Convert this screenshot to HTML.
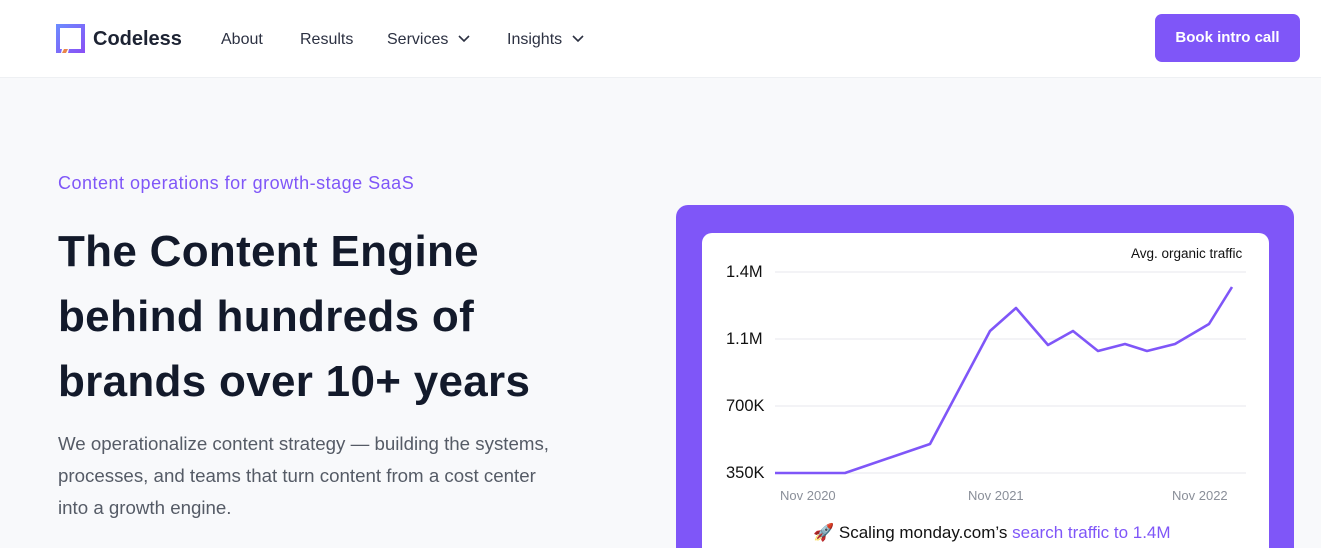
<!DOCTYPE html>
<html><head><meta charset="utf-8"><style>
*{margin:0;padding:0;box-sizing:border-box}
html,body{width:1321px;height:548px;overflow:hidden}
body{background:#f8f9fb;font-family:"Liberation Sans",sans-serif;color:#131a2b;position:relative}
.hdr{position:absolute;left:0;top:0;width:1321px;height:78px;background:#fff;border-bottom:1px solid #eef0f3}
.logo{position:absolute;left:56px;top:24px}
.brand{position:absolute;left:93px;top:28px;font-size:20px;font-weight:bold;color:#1d2333}
.nav{position:absolute;top:31px;font-size:16px;color:#2c3142}
.btn{position:absolute;left:1155px;top:14px;width:145px;height:48px;background:#7f56f8;border-radius:7px;color:#fff;font-size:15px;font-weight:bold;text-align:center;line-height:48px}
.eyebrow{position:absolute;left:58px;top:173px;font-size:18px;letter-spacing:0.5px;color:#7f56f8}
h1{position:absolute;left:58px;top:219px;font-size:44px;line-height:65px;font-weight:bold;color:#131a2b;letter-spacing:0.3px}
.p{position:absolute;left:58px;top:428px;font-size:18.7px;line-height:32px;color:#555b66;width:560px}
.card{position:absolute;left:676px;top:205px;width:618px;height:360px;background:#7f56f8;border-radius:12px}
.inner{position:absolute;left:702px;top:233px;width:567px;height:340px;background:#fff;border-radius:10px}
.t{position:absolute;font-size:16.5px;color:#111}
.x{position:absolute;top:488px;font-size:13px;color:#8a8f99}
</style></head><body>
<div class="hdr">
<svg class="logo" width="30" height="30" viewBox="0 0 30 30"><defs><linearGradient id="g" x1="0" y1="0" x2="1" y2="1"><stop offset="0" stop-color="#6b8cff"/><stop offset="1" stop-color="#8a4ff5"/></linearGradient></defs><path d="M0 0H29V29H12L13 25H25V4H4V25H6L5 29H0Z" fill="url(#g)"/><path d="M6 29L8 25H12L10 29Z" fill="#e9844a"/></svg>
<div class="brand">Codeless</div>
<div class="nav" style="left:221px">About</div>
<div class="nav" style="left:300px">Results</div>
<div class="nav" style="left:387px">Services <svg width="14" height="10" viewBox="0 0 14 10" style="margin-left:4px"><path d="M2 2L7 7L12 2" stroke="#2c3142" stroke-width="1.6" fill="none"/></svg></div>
<div class="nav" style="left:507px">Insights <svg width="14" height="10" viewBox="0 0 14 10" style="margin-left:4px"><path d="M2 2L7 7L12 2" stroke="#2c3142" stroke-width="1.6" fill="none"/></svg></div>
<div class="btn">Book intro call</div>
</div>
<div class="eyebrow">Content operations for growth-stage SaaS</div>
<h1>The Content Engine<br>behind hundreds of<br>brands over 10+ years</h1>
<div class="p">We operationalize content strategy — building the systems,<br>processes, and teams that turn content from a cost center<br>into a growth engine.</div>
<div class="card"></div>
<div class="inner"></div>
<svg style="position:absolute;left:0;top:0" width="1321" height="548">
<g stroke="#ececf0" stroke-width="1.2"><line x1="775" y1="272" x2="1246" y2="272"/><line x1="775" y1="339" x2="1246" y2="339"/><line x1="775" y1="406" x2="1246" y2="406"/><line x1="775" y1="473" x2="1246" y2="473"/></g>
<polyline points="775,473 845,473 930,444 990,331 1016,308 1048,345 1073,331 1098,351 1125,344 1147,351 1175,344 1209,324 1232,287" fill="none" stroke="#7f56f8" stroke-width="2.6" stroke-linejoin="round"/>
</svg>
<div class="t" style="left:1131px;top:246px;font-size:13.5px">Avg. organic traffic</div>
<div class="t" style="left:726px;top:263px">1.4M</div>
<div class="t" style="left:726px;top:330px">1.1M</div>
<div class="t" style="left:726px;top:397px">700K</div>
<div class="t" style="left:726px;top:464px">350K</div>
<div class="x" style="left:780px">Nov 2020</div>
<div class="x" style="left:968px">Nov 2021</div>
<div class="x" style="left:1172px">Nov 2022</div>
<div class="t" style="left:813px;top:523px;font-size:17px">🚀 Scaling monday.com’s <span style="color:#7f56f8">search traffic to 1.4M</span></div>
</body></html>
